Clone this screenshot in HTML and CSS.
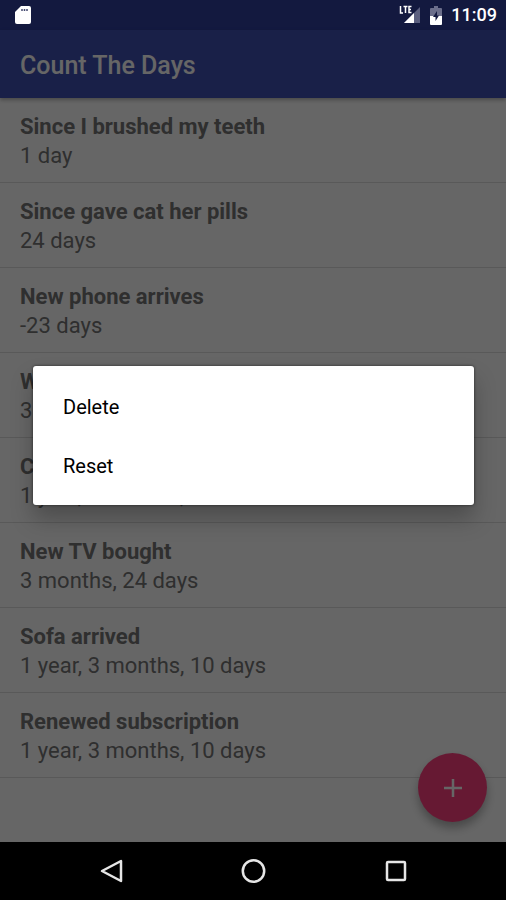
FILE: index.html
```html
<!DOCTYPE html>
<html lang="en">
<head>
    <meta charset="UTF-8">
    <meta name="viewport" content="width=device-width, initial-scale=1.0">
    <title>Count The Days</title>
    <link rel="stylesheet" href="styles.css">
</head>
<body>
    <div class="screen">
        <div class="status-bar">
            <svg class="sd-card" width="18" height="20" viewBox="0 0 18 20">
                <path d="M7 1h8q2 0 2 2v14q0 2-2 2H3q-2 0-2-2V7z" fill="#fff"/>
                <path d="M8 4v2M10.500 4v2M13 4v2" stroke="#444a70" stroke-width="1.5"/>
            </svg>
            <div class="status-icons">
                <svg width="22" height="20" viewBox="0 0 22 20">
                    <path d="M21 2v16H5z" fill="#5b5f7f"/>
                    <path d="M15 8v10H5z" fill="#fff"/>
                    <path d="M1.5 1v7H4M4.500 1.5h4M6.500 1.500v6.500M12.500 1.500H10v6h2.500M10 4.500h2" fill="none" stroke="#fff" stroke-width="1.500"/>
                </svg>
                <svg width="12" height="19" viewBox="0 0 12 19">
                    <path d="M4 0h4v2h3q1 0 1 1v7H0V3q0-1 1-1h3z" fill="#6b6e8b"/>
                    <path d="M0 10h12v8q0 1-1 1H1q-1 0-1-1z" fill="#fff"/>
                    <path d="M7 5L3 11h2.500v4L9 9.500H7z" fill="#131940"/>
                </svg>
                <span class="clock">11:09</span>
            </div>
        </div>

        <header class="app-bar">
            <h1>Count The Days</h1>
        </header>

        <main class="content">
            <ul class="counters">
                <li><strong>Since I brushed my teeth</strong><span>1 day</span></li>
                <li><strong>Since gave cat her pills</strong><span>24 days</span></li>
                <li><strong>New phone arrives</strong><span>-23 days</span></li>
                <li><strong>W</strong><span>3</span></li>
                <li><strong>C</strong><span>1 year, 3 months,</span></li>
                <li><strong>New TV bought</strong><span>3 months, 24 days</span></li>
                <li><strong>Sofa arrived</strong><span>1 year, 3 months, 10 days</span></li>
                <li><strong>Renewed subscription</strong><span>1 year, 3 months, 10 days</span></li>
            </ul>
            <button class="fab" aria-label="Add counter">
                <svg width="20" height="20" viewBox="0 0 20 20">
                    <path d="M10 1v18M1 10h18" stroke="#fff" stroke-width="2.500"/>
                </svg>
            </button>
        </main>

        <div class="scrim">
            <div class="dialog" role="dialog" aria-label="Counter actions">
                <button>Delete</button>
                <button>Reset</button>
            </div>
        </div>

        <nav class="nav-bar">
            <button aria-label="Back">
                <svg width="26" height="26" viewBox="0 0 26 26">
                    <path d="M23 3v20L4 13z"/>
                </svg>
            </button>
            <button aria-label="Home">
                <svg width="26" height="26" viewBox="0 0 26 26">
                    <circle cx="13.500" cy="13" r="10.700"/>
                </svg>
            </button>
            <button aria-label="Recent apps">
                <svg width="26" height="26" viewBox="0 0 26 26">
                    <rect x="5" y="4" width="18" height="18" rx="1"/>
                </svg>
            </button>
        </nav>
    </div>
</body>
</html>
```
FILE: styles.css
```css
* {
    margin: 0;
    padding: 0;
    box-sizing: border-box;
}

body {
    font-family: Roboto, sans-serif;
    background: #fff;
    color: #757575;
}

button {
    border: none;
    background: none;
    font: inherit;
    cursor: pointer;
}

svg {
    display: block;
}

.screen {
    position: relative;
    display: flex;
    flex-direction: column;
    min-height: 100vh;
}

.status-bar {
    display: flex;
    align-items: center;
    justify-content: space-between;
    height: 30px;
    padding: 0 9px 0 14px;
    background: #303f9f;
}

/* status bar contents stay bright above the scrim */
.sd-card,
.status-icons {
    position: relative;
    z-index: 3;
}

.status-icons {
    display: flex;
    align-items: center;
    gap: 9px;
    color: #fff;
}

.clock {
    font-size: 18px;
    font-weight: 500;
    line-height: 32px;
}

.app-bar {
    position: relative;
    z-index: 1;
    padding: 22px 20px 18px;
    background: #3f51b5;
    color: #fff;
    box-shadow: 0 2px 4px rgba(0,0,0,0.3);
}

.app-bar h1 {
    font-size: 25px;
    font-weight: 500;
    line-height: 28px;
}

.content {
    position: relative;
    flex: 1;
}

.counters {
    list-style: none;
}

.counters li {
    display: flex;
    flex-direction: column;
    padding: 14px 20px 12px;
    border-bottom: 1px solid #dedede;
    font-size: 22px;
    line-height: 29px;
}

.counters strong {
    font-weight: 700;
}

.fab {
    position: absolute;
    right: 19px;
    bottom: 20px;
    display: flex;
    align-items: center;
    justify-content: center;
    width: 69px;
    height: 69px;
    border-radius: 50%;
    background: #ff4081;
    box-shadow: 0 6px 10px rgba(0,0,0,0.3);
}

.scrim {
    position: absolute;
    inset: 0;
    z-index: 2;
    display: flex;
    align-items: center;
    padding: 0 32px 29px 33px;
    background: rgba(0,0,0,0.6);
}

.dialog {
    flex: 1;
    padding: 11px 0 10px;
    border-radius: 3px;
    background: #fff;
    box-shadow: 0 0 3px rgba(0,0,0,0.6), 0 14px 22px rgba(0,0,0,0.25);
}

.dialog button {
    display: block;
    width: 100%;
    height: 59px;
    padding: 0 30px;
    font-size: 20px;
    color: #000;
    text-align: left;
}

.nav-bar {
    position: relative;
    z-index: 3;
    display: flex;
    justify-content: center;
    gap: 116px;
    height: 58px;
    background: #000;
}

.nav-bar svg {
    fill: none;
    stroke: #e6e6e6;
    stroke-width: 2.5;
    stroke-linejoin: round;
}
```
